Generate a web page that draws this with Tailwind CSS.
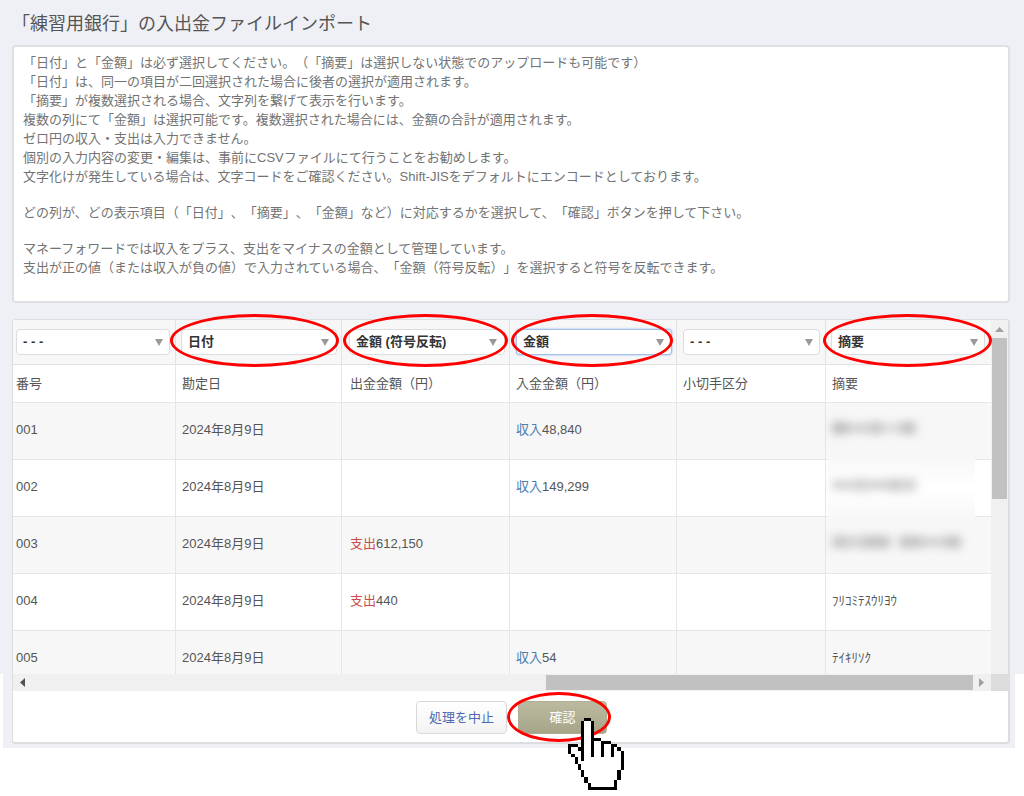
<!DOCTYPE html>
<html lang="ja">
<head>
<meta charset="utf-8">
<title>入出金ファイルインポート</title>
<script src="https://cdn.jsdelivr.net/npm/@tailwindcss/browser@4"></script>
</head>
<body class="min-h-screen bg-white font-['Liberation_Sans','Noto_Sans_CJK_JP',sans-serif] text-[13px] text-[#555] [text-spacing-trim:space-all]">
<div class="min-h-screen bg-linear-to-b from-[#eff0f5] from-[674px] to-white to-[674px]">
<main class="ml-[3px] mr-[9px] bg-[#eff0f5] pb-1 pl-[9px] pr-[5px]">
  <h1 class="pt-[10px] text-[18px] leading-7">「練習用銀行」の入出金ファイルインポート</h1>

  <section class="mt-[7px] flex flex-col gap-[17px] rounded-[4px] border-2 border-[#dfe0e1] bg-white px-[9px] pt-[6px] pb-6 leading-[19px] text-[#737373]">
    <p>「日付」と「金額」は必ず選択してください。（「摘要」は選択しない状態でのアップロードも可能です）<br>「日付」は、同一の項目が二回選択された場合に後者の選択が適用されます。<br>「摘要」が複数選択される場合、文字列を繋げて表示を行います。<br>複数の列にて「金額」は選択可能です。複数選択された場合には、金額の合計が適用されます。<br>ゼロ円の収入・支出は入力できません。<br>個別の入力内容の変更・編集は、事前にCSVファイルにて行うことをお勧めします。<br>文字化けが発生している場合は、文字コードをご確認ください。Shift-JISをデフォルトにエンコードとしております。</p>
    <p>どの列が、どの表示項目（「日付」、「摘要」、「金額」など）に対応するかを選択して、「確認」ボタンを押して下さい。</p>
    <p>マネーフォワードでは収入をプラス、支出をマイナスの金額として管理しています。<br>支出が正の値（または収入が負の値）で入力されている場合、「金額（符号反転）」を選択すると符号を反転できます。</p>
  </section>

  <section class="mt-4 rounded-[4px] border border-r-2 border-b-2 border-[#dcdddf] bg-white">
    <div class="flex">
      <table class="w-full flex-1 table-fixed border-separate border-spacing-0 text-left leading-5">
        <colgroup><col class="w-[163px]"><col class="w-[166px]"><col class="w-[168px]"><col class="w-[167px]"><col class="w-[149px]"><col></colgroup>
        <thead>
          <tr class="h-[45px] bg-[#f7f7f7] align-top">
            <th class="border-r border-b border-[#e2e2e2] pt-[9px] pr-[5px] pl-[3px]">
              <div class="relative">
                <select aria-label="番号の項目" class="h-[26px] w-full appearance-none rounded-[4px] border border-[#ddd] bg-white px-1.5 font-bold text-[#333]"><option>- - -</option></select>
                <svg class="pointer-events-none absolute top-[10px] right-[7px] h-[7px] w-[8px]" viewBox="0 0 8 7"><path d="M0 0h8L4 7z" fill="#999"/></svg>
              </div>
            </th>
            <th class="border-r border-b border-[#e2e2e2] pt-[9px] pr-[4px] pl-[5px]">
              <div class="relative">
                <select aria-label="勘定日の項目" class="h-[26px] w-full appearance-none rounded-[4px] border border-[#ddd] bg-white px-1.5 font-bold text-[#333]"><option>日付</option></select>
                <svg class="pointer-events-none absolute top-[10px] right-[8px] h-[7px] w-[8px]" viewBox="0 0 8 7"><path d="M0 0h8L4 7z" fill="#999"/></svg>
                <span class="pointer-events-none absolute -top-[15px] -right-[2px] -bottom-[12px] -left-[11px] z-10 rounded-[50%] border-3 border-[#f00]"></span>
              </div>
            </th>
            <th class="border-r border-b border-[#e2e2e2] pt-[9px] pr-[4px] pl-[7px]">
              <div class="relative">
                <select aria-label="出金金額の項目" class="h-[26px] w-full appearance-none rounded-[4px] border border-[#ddd] bg-white px-1.5 font-bold text-[#333]"><option>金額 (符号反転)</option></select>
                <svg class="pointer-events-none absolute top-[10px] right-[8px] h-[7px] w-[8px]" viewBox="0 0 8 7"><path d="M0 0h8L4 7z" fill="#999"/></svg>
                <span class="pointer-events-none absolute -top-[15px] -right-[3px] -bottom-[12px] -left-[6px] z-10 rounded-[50%] border-3 border-[#f00]"></span>
              </div>
            </th>
            <th class="border-r border-b border-[#e2e2e2] pt-[9px] pr-[4px] pl-[6px]">
              <div class="relative">
                <select aria-label="入金金額の項目" class="h-[26px] w-full appearance-none rounded-[4px] border border-[#a3c0ec] bg-white px-1.5 font-bold text-[#333] shadow-[0_0_2px_#7da7e8]"><option>金額</option></select>
                <svg class="pointer-events-none absolute top-[10px] right-[8px] h-[7px] w-[8px]" viewBox="0 0 8 7"><path d="M0 0h8L4 7z" fill="#999"/></svg>
                <span class="pointer-events-none absolute -top-[15px] -right-[1px] -bottom-[12px] -left-[5px] z-10 rounded-[50%] border-3 border-[#f00]"></span>
              </div>
            </th>
            <th class="border-r border-b border-[#e2e2e2] pt-[9px] pr-[5px] pl-[6px]">
              <div class="relative">
                <select aria-label="小切手区分の項目" class="h-[26px] w-full appearance-none rounded-[4px] border border-[#ddd] bg-white px-1.5 font-bold text-[#333]"><option>- - -</option></select>
                <svg class="pointer-events-none absolute top-[10px] right-[7px] h-[7px] w-[8px]" viewBox="0 0 8 7"><path d="M0 0h8L4 7z" fill="#999"/></svg>
              </div>
            </th>
            <th class="border-b border-[#e2e2e2] pt-[9px] pr-[6px] pl-[5px]">
              <div class="relative">
                <select aria-label="摘要の項目" class="h-[26px] w-full appearance-none rounded-[4px] border border-[#ddd] bg-white px-1.5 font-bold text-[#333]"><option>摘要</option></select>
                <svg class="pointer-events-none absolute top-[10px] right-[7px] h-[7px] w-[8px]" viewBox="0 0 8 7"><path d="M0 0h8L4 7z" fill="#999"/></svg>
                <span class="pointer-events-none absolute -top-[15px] -right-[7px] -bottom-[12px] -left-[8px] z-10 rounded-[50%] border-3 border-[#f00]"></span>
              </div>
            </th>
          </tr>
        </thead>
        <tbody class="*:align-top [&_td]:border-[#e6e6e6] [&_td]:border-r [&_td]:pl-1.5 [&_td:first-child]:pl-[3px] [&_td:nth-child(3)]:pl-2 [&_td:last-child]:border-r-0">
          <tr class="h-[38px] *:border-b *:pt-[9px]"><td>番号</td><td>勘定日</td><td>出金金額（円）</td><td>入金金額（円）</td><td>小切手区分</td><td>摘要</td></tr>
          <tr class="h-[57px] bg-[#f7f7f7] *:border-b *:pt-[17px]"><td>001</td><td>2024年8月9日</td><td></td><td><span class="text-[#4a7eb0]">収入</span>48,840</td><td></td>
            <td><div class="flex h-4 items-center gap-px opacity-80 blur-[5px]" role="img" aria-label="非表示"><i class="h-3 w-4 bg-[#aaa]"></i><i class="h-2 w-5 bg-[#bbb]"></i><i class="h-3 w-3 bg-[#b5b5b5]"></i><i class="h-2 w-4 bg-[#ccc]"></i><i class="h-3 w-4 bg-[#b2b2b2]"></i></div></td></tr>
          <tr class="h-[57px] *:border-b *:pt-[17px]"><td>002</td><td>2024年8月9日</td><td></td><td><span class="text-[#4a7eb0]">収入</span>149,299</td><td></td>
            <td class="relative"><div class="absolute -top-[6px] right-4 -bottom-[6px] left-0.5 bg-linear-to-b from-[#f7f7f7] via-white to-[#f7f7f7] via-50%"></div>
              <div class="relative flex h-4 items-center gap-px opacity-80 blur-[5px]" role="img" aria-label="非表示"><i class="h-2 w-5 bg-[#bbb]"></i><i class="h-3 w-4 bg-[#c4c4c4]"></i><i class="h-2 w-4 bg-[#b5b5b5]"></i><i class="h-3 w-4 bg-[#bbb]"></i><i class="h-3 w-3 bg-[#c2c2c2]"></i></div></td></tr>
          <tr class="h-[57px] bg-[#f7f7f7] *:border-b *:pt-[17px]"><td>003</td><td>2024年8月9日</td><td><span class="text-[#cc4b4b]">支出</span>612,150</td><td></td><td></td>
            <td class="relative"><div class="flex h-4 items-center gap-px opacity-80 blur-[5px]" role="img" aria-label="非表示"><i class="h-3 w-4 bg-[#b8b8b8]"></i><i class="h-3 w-3 bg-[#c8c8c8]"></i><i class="mr-2 h-3 w-7 bg-[#b5b2b5]"></i><i class="h-3 w-6 bg-[#b5b5b5]"></i><i class="h-2 w-5 bg-[#bbb]"></i><i class="h-3 w-4 bg-[#b2b2b2]"></i></div></td></tr>
          <tr class="h-[57px] *:border-b *:pt-[17px]"><td>004</td><td>2024年8月9日</td><td><span class="text-[#cc4b4b]">支出</span>440</td><td></td><td></td><td>ﾌﾘｺﾐﾃｽｳﾘﾖｳ</td></tr>
          <tr class="h-[43px] bg-[#f7f7f7] *:pt-[17px]"><td>005</td><td>2024年8月9日</td><td></td><td><span class="text-[#4a7eb0]">収入</span>54</td><td></td><td>ﾃｲｷﾘｿｸ</td></tr>
        </tbody>
      </table>
      <div class="flex w-[17px] flex-col items-center bg-[#f0f0f0] pt-[7px]" aria-hidden="true">
        <svg class="h-[5px] w-[9px]" viewBox="0 0 9 5"><path d="M0 5h9L4.500 0z" fill="#a0a0a0"/></svg>
        <div class="mt-[6px] h-[161px] w-[15px] bg-[#c1c1c1]"></div>
      </div>
    </div>
    <div class="flex h-[17px] items-center bg-[#f0f0f0] pl-[7px]" aria-hidden="true">
      <svg class="h-[9px] w-[5px]" viewBox="0 0 5 9"><path d="M5 0v9L0 4.500z" fill="#505050"/></svg>
      <div class="flex flex-1 justify-end"><div class="h-[15px] w-[45%] bg-[#c1c1c1]"></div></div>
      <svg class="mr-[7px] ml-[6px] h-[9px] w-[5px]" viewBox="0 0 5 9"><path d="M0 0v9l5-4.500z" fill="#a0a0a0"/></svg>
      <div class="h-full w-[17px] bg-[#dcdcdc]"></div>
    </div>
    <div class="flex justify-center gap-[11px] pt-[10px] pb-2 pl-0.5">
      <button type="button" class="h-[33px] w-[91px] rounded-[4px] border border-[#d8d8d8] bg-linear-to-b from-white to-[#f3f3f3] text-[#5068b0]">処理を中止</button>
      <div class="relative">
        <button type="button" class="h-[33px] w-[89px] rounded-[4px] border border-[#b0af92] bg-linear-to-b from-[#bbb99f] to-[#a7a589] text-white">確認</button>
        <span class="pointer-events-none absolute -top-[9px] -right-[4px] -bottom-[8px] -left-[11px] rounded-[50%] border-3 border-[#f00]"></span>
        <svg class="pointer-events-none absolute top-[17px] left-[50px] h-[72px] w-[56px]" viewBox="0 0 17 22" preserveAspectRatio="none" shape-rendering="crispEdges" aria-hidden="true">
          <path fill="#fff" d="M5 1h2v6h3v1h3v1h2v1h1v6h-1v3h-1v2H7v-1H6v-2H5v-2H4v-2H3v-2H2v-1H1V9h2v1h1v2h1z"/>
          <path d="M5 0h2v1H5zM4 1h1v12H4v-3H3V9h1zM7 1h1v5h2v1h3v1h2v1h1v1h1v6h-1v3h-1v3H6v-2h1v1h7v-2h1v-3h1v-6h-1V9h-1v3h-1V8h-2v4h-1V7H8v5H7zM1 8h2v1H1v2H0V8zM1 11h1v1H1zM2 12h1v2H2zM3 14h1v2H3zM4 16h1v2H4zM5 18h1v2H5z"/>
        </svg>
      </div>
    </div>
  </section>
</main>
</div>
</body>
</html>
